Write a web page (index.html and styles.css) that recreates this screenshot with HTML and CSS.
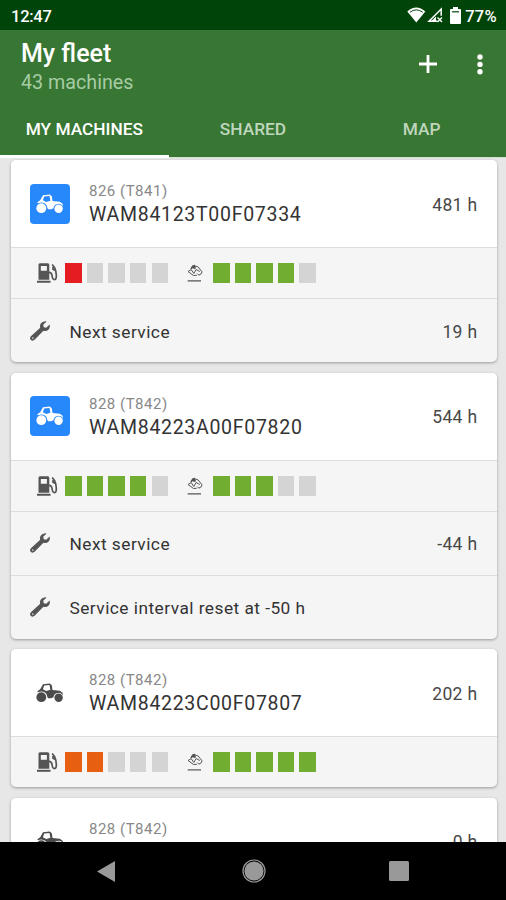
FILE: index.html
```
<!DOCTYPE html>
<html lang="en">
<head>
<meta charset="utf-8">
<title>My fleet</title>
<link rel="stylesheet" href="styles.css">
</head>
<body>
<svg class="defs" aria-hidden="true">
  <symbol id="tractor" viewBox="0 0 28 20">
    <circle cx="5.3" cy="14.2" r="4.9"/><circle cx="22.6" cy="14.8" r="4.2"/>
    <path fill-rule="evenodd" d="M4.2 6.2 7 1.2 13.8.4 15.8 2.2 16.5 7 23.8 7.8 26.6 9.8 27 12.8Q25.7 9.8 22.6 9.7 18 10 17.4 14.2L15.3 15.2H12L11.2 13.4Q10.4 8.5 5.2 8.4L1.2 9.2 1.7 8.1Q2.5 7.1 4.2 6.2ZM8.2 2.5 6.9 6.3 10.2 8 14.4 6.8 13.5 2Z"/>
  </symbol>
  <symbol id="fuel" viewBox="0 0 21 20">
    <path fill-rule="evenodd" d="M1.5 1.7Q1.5.2 2.8.2H10.8Q12.3.2 12.3 1.7V16.7H1.5ZM3.8 3V7.8H9.9V3Z"/>
    <path d="M0 17.8H13.5V19.8H0Z"/>
    <path d="M12 9.3Q14.7 9.3 15 12.5 15.5 16.6 17.5 16.6 19.6 16.4 19.3 12 19 7.5 17.8 5L15.2 1.5M16 4V6.2L18.4 7.5" fill="none" stroke="currentColor" stroke-width="1.7"/>
  </symbol>
  <symbol id="load" viewBox="0 0 16 18">
    <path d="M3.4 4.2 5.5 1.2 8 .8 9 4.4 6.8 5 6 4 4.2 5.6Z"/>
    <path d="M8.2 2 11.2 3 15 7.8 14.2 9.9 11.8 11.2 10.3 9.6M1 7.5 4.2 5.6 6.8 9.5 9.1 5.5 12.8 7.5M1 7.5 6.5 11.5 9.8 11.3" fill="none" stroke="currentColor" stroke-width="1"/>
    <path d="M.7 16.9H14" fill="none" stroke="currentColor" stroke-width="1.2"/>
  </symbol>
  <symbol id="wrench" viewBox="0 0 20 20">
    <path d="M16.6.4 13.2 3.8 13.8 6.2 16.2 6.8 19.6 3.4Q20.6 6.8 18.2 8.9 16.2 10.6 13.4 9.8L4.6 18.8Q2.8 20.4.9 18.9-.8 17.2.9 15.3L10.2 6.8Q9.4 4.2 11.2 2.1 13.6-.1 16.6.4ZM3.1 16.3Q2.1 16.2 2.1 17.2 2.3 18 3.2 17.8 4 17 3.1 16.3Z"/>
  </symbol>
</svg>
<div class="screen">
  <div class="status">
    <span>12:47</span>
    <div class="status-icons">
      <svg width="19" height="16" viewBox="0 0 19 16"><path d="M.3 4.5Q9.2-3.4 18.3 4.5L9.3 15.5Z"/><path d="M3 5.2Q9.2.5 15.7 5.2" fill="none" stroke="#00440a" stroke-width="1"/></svg>
      <svg width="16" height="16" viewBox="0 0 16 16"><path d="M10.5 14.2H2L14.2 2V8.8" fill="none" stroke="#fff" stroke-width="1.5"/><path d="M4.5 14 9 9.5V14Z"/><path d="M10.5 10.5 15 15M15 10.5 10.5 15" stroke="#fff" stroke-width="1.4"/></svg>
      <svg class="battery" width="11" height="17" viewBox="0 0 11 17"><path d="M3 0H8V2H10Q11 2 11 3V15.8Q11 17 10 17H1Q0 17 0 15.8V3Q0 2 1 2H3Z"/><path d="M2 4.2H9V5.4H2Z" fill="#00440a"/></svg>
      <span>77%</span>
    </div>
  </div>
  <header>
    <div class="toolbar">
      <div class="titles"><h1>My fleet</h1><p>43 machines</p></div>
      <svg class="add" width="18" height="18" viewBox="0 0 18 18"><path d="M7.6 0H10.4V7.6H18V10.4H10.4V18H7.6V10.4H0V7.6H7.6Z"/></svg>
      <svg class="more" width="6" height="21" viewBox="0 0 6 21"><circle cx="3" cy="3" r="2.7"/><circle cx="3" cy="10.4" r="2.7"/><circle cx="3" cy="17.8" r="2.7"/></svg>
    </div>
    <nav class="tabs"><span class="active">MY MACHINES</span><span>SHARED</span><span>MAP</span></nav>
  </header>
  <main>
    <article>
      <div class="head"><div class="avatar blue"><svg><use href="#tractor"/></svg></div><div class="name"><small>826 (T841)</small><b>WAM84123T00F07334</b></div><span class="hours">481 h</span></div>
      <div class="levels"><svg class="fuel"><use href="#fuel"/></svg><div class="bar red"><i class="on"></i><i></i><i></i><i></i><i></i></div><svg class="load"><use href="#load"/></svg><div class="bar"><i class="on"></i><i class="on"></i><i class="on"></i><i class="on"></i><i></i></div></div>
      <div class="service"><svg><use href="#wrench"/></svg><span>Next service</span><span class="hours">19 h</span></div>
    </article>
    <article>
      <div class="head"><div class="avatar blue"><svg><use href="#tractor"/></svg></div><div class="name"><small>828 (T842)</small><b>WAM84223A00F07820</b></div><span class="hours">544 h</span></div>
      <div class="levels"><svg class="fuel"><use href="#fuel"/></svg><div class="bar"><i class="on"></i><i class="on"></i><i class="on"></i><i class="on"></i><i></i></div><svg class="load"><use href="#load"/></svg><div class="bar"><i class="on"></i><i class="on"></i><i class="on"></i><i></i><i></i></div></div>
      <div class="service"><svg><use href="#wrench"/></svg><span>Next service</span><span class="hours">-44 h</span></div>
      <div class="service"><svg><use href="#wrench"/></svg><span>Service interval reset at -50 h</span></div>
    </article>
    <article>
      <div class="head"><div class="avatar"><svg><use href="#tractor"/></svg></div><div class="name"><small>828 (T842)</small><b>WAM84223C00F07807</b></div><span class="hours">202 h</span></div>
      <div class="levels"><svg class="fuel"><use href="#fuel"/></svg><div class="bar orange"><i class="on"></i><i class="on"></i><i></i><i></i><i></i></div><svg class="load"><use href="#load"/></svg><div class="bar"><i class="on"></i><i class="on"></i><i class="on"></i><i class="on"></i><i class="on"></i></div></div>
    </article>
    <article>
      <div class="head"><div class="avatar"><svg><use href="#tractor"/></svg></div><div class="name"><small>828 (T842)</small></div><span class="hours">0 h</span></div>
    </article>
  </main>
  <footer>
    <svg width="18" height="21" viewBox="0 0 18 21"><path d="M0 10.5 18 0V21Z"/></svg>
    <svg width="24" height="24" viewBox="0 0 24 24"><circle cx="12" cy="12" r="11" fill="none" stroke="#999" stroke-width="1.2"/><circle cx="12" cy="12" r="9.6"/></svg>
    <svg width="20" height="20" viewBox="0 0 20 20"><rect width="20" height="20" rx="1.5"/></svg>
  </footer>
</div>
</body>
</html>
```
FILE: styles.css
```
* { box-sizing: border-box; }
body { margin: 0; font-family: Roboto, "Liberation Sans", sans-serif; color: #333; }
svg { display: block; fill: currentColor; flex: none; }
.defs { display: none; }
.screen { width: 506px; height: 900px; display: flex; flex-direction: column; overflow: hidden; background: #e7e7e7; }
.status { height: 30px; flex: none; background: #00440a; color: #fff; display: flex; justify-content: space-between; align-items: center; padding: 2px 9px 0 11px; font-size: 16.5px; font-weight: 500; letter-spacing: -.25px; }
.status-icons { display: flex; align-items: center; }
.status-icons svg { margin-top: -2px; }
.status-icons svg:first-child { margin-right: 1px; }
.status-icons .battery { margin: -2px 4px 0 7px; }
.status-icons span { letter-spacing: .3px; }
header { height: 128px; flex: none; background: #387634; color: #fff; display: flex; flex-direction: column; justify-content: space-between; }
.toolbar { display: flex; padding: 8px 23px 0 21px; }
.titles { flex: 1; }
h1 { margin: 0; font-size: 25px; line-height: 31px; font-weight: 500; }
.titles p { margin: 0; font-size: 19.7px; line-height: 28px; color: #a6cca3; }
.add { margin-top: 17px; }
.more { margin: 16px 0 0 40px; }
.tabs { display: grid; grid-template-columns: repeat(3, 1fr); height: 58px; text-align: center; font-size: 17.3px; line-height: 58px; font-weight: 500; color: #bfd6bd; }
.tabs span { height: 58px; border-bottom: 1px solid #d3dfd2; }
.tabs .active { color: #fff; border-bottom: 3px solid #fff; }
main { flex: 1; min-height: 0; overflow: hidden; padding: 2px 9.5px 0 10.5px; display: flex; flex-direction: column; gap: 10.5px; }
article { flex: none; border-radius: 5px; overflow: hidden; background: #f5f5f5; box-shadow: 0 1px 3px #0005; }
.head { height: 87px; background: #fff; display: flex; align-items: center; padding: 0 19px; }
.avatar { width: 40px; height: 40px; border-radius: 4px; display: grid; place-items: center; color: #4b4b4b; }
.avatar.blue { background: #2788fb; color: #fff; }
.avatar svg { width: 28px; height: 20px; }
.name { margin-left: 19.5px; flex: 1; height: 45px; display: flex; flex-direction: column; }
.name small { font-size: 15px; line-height: 20px; letter-spacing: .5px; color: #888; }
.name b { font-size: 19.5px; line-height: 27px; font-weight: 400; letter-spacing: .7px; }
.hours { font-size: 17.5px; letter-spacing: .35px; color: #484848; margin-left: auto; position: relative; top: 1px; }
.levels { height: 51px; border-top: 1px solid #ddd; display: flex; align-items: center; padding-left: 26px; color: #555; }
.fuel { width: 21px; height: 20px; }
.load { width: 16px; height: 18px; margin-left: 19px; }
.bar { display: flex; gap: 5.1px; margin-left: 7.7px; }
.load + .bar { margin-left: 10px; }
.bar i { width: 16.5px; height: 20px; background: #d4d4d4; }
.bar .on { background: #70ad31; }
.bar.red .on { background: #e61c23; }
.bar.orange .on { background: #e76011; }
.service { height: 64px; border-top: 1px solid #ddd; display: flex; align-items: center; padding: 0 19px; font-size: 17.3px; letter-spacing: .47px; }
.service svg { width: 20px; height: 20px; color: #555; margin-right: 20px; }
.service span { position: relative; top: 1px; }
footer { height: 58px; flex: none; background: #000; color: #999; display: flex; align-items: center; padding-left: 97px; }
footer svg:nth-child(2) { margin-left: 127px; }
footer svg:nth-child(3) { margin-left: 123px; }
```
